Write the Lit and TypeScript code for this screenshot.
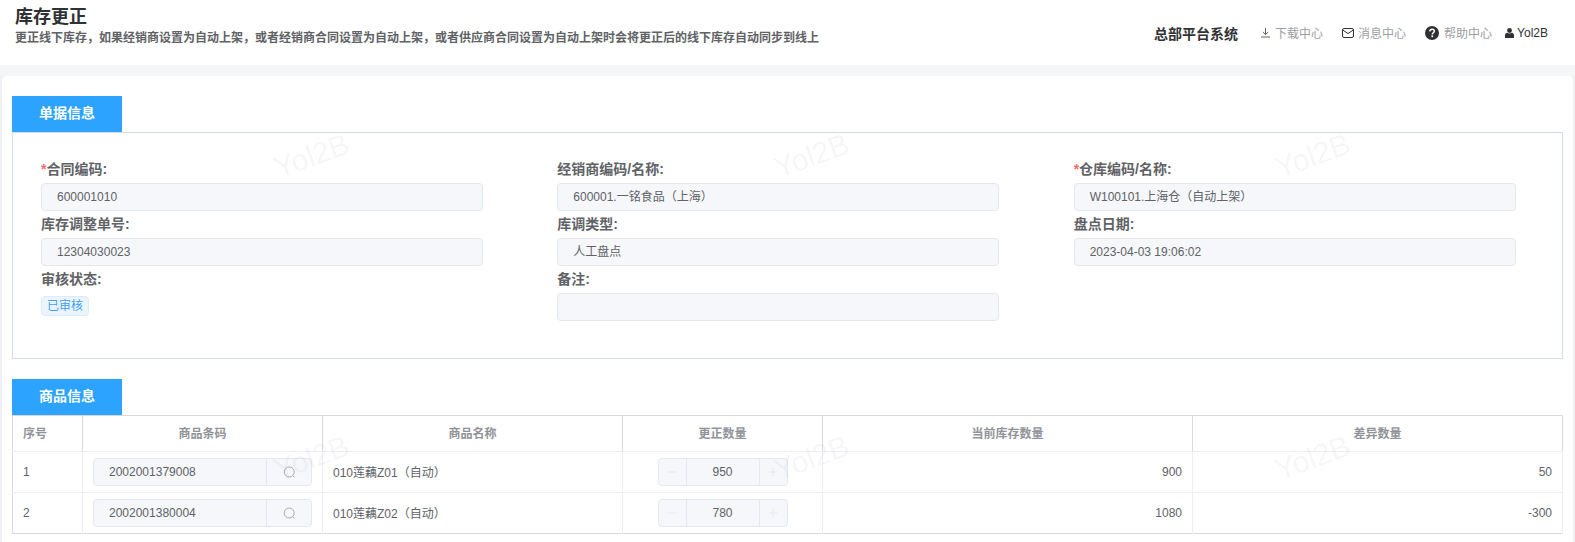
import { LitElement, html, css, svg } from "lit";
import { customElement } from "lit/decorators.js";

const F = [
  ["*", "合同编码:", "600001010"],
  ["", "经销商编码/名称:", "600001.一铭食品（上海）"],
  ["*", "仓库编码/名称:", "W100101.上海仓（自动上架）"],
  ["", "库存调整单号:", "12304030023"],
  ["", "库调类型:", "人工盘点"],
  ["", "盘点日期:", "2023-04-03 19:06:02"],
];
const R = [
  ["1", "2002001379008", "010莲藕Z01（自动）", "950", "900", "50"],
  ["2", "2002001380004", "010莲藕Z02（自动）", "780", "1080", "-300"],
];
const MARKS = [
  [273, 139], [773, 139], [1274, 139],
  [273, 441], [773, 441], [1274, 441],
];

@customElement("app-root")
export class AppRoot extends LitElement {
  static styles = css`
    :host {
      display: block;
      width: 1575px;
      height: 542px;
      overflow: hidden;
      position: relative;
      background: #f0f1f6;
      color: #606266;
      font-family: "Liberation Sans", "Noto Sans CJK SC", sans-serif;
      font-size: 12px;
    }
    .hdr {
      height: 65px;
      background: #fff;
      display: flex;
      justify-content: space-between;
      box-sizing: border-box;
      padding: 6px 27px 0 15px;
    }
    h1 {
      margin: 0;
      font-size: 18px;
      line-height: 22px;
      font-weight: 700;
      color: #303133;
    }
    .sub {
      font-size: 12px;
      line-height: 16px;
      margin-top: 2px;
      font-weight: 700;
      color: #606266;
    }
    .nav {
      display: flex;
      align-items: center;
      height: 53px;
      color: #9c9ea3;
    }
    .sys { font-size: 14px; font-weight: 700; color: #303133; margin-right: 22px; }
    .nav svg { flex: none; display: block; }
    .it { display: flex; align-items: center; gap: 4px; margin-right: 19px; }
    .it.help { gap: 5px; margin-right: 13px; }
    .it.user { gap: 3px; margin-right: 0; color: #303133; }
    .band { height: 11px; background: #f5f6f8; }
    .card {
      margin: 0 2px;
      height: 480px;
      background: #fff;
      border-radius: 4px 4px 0 0;
      box-sizing: border-box;
      padding: 20px 10px 0;
    }
    .tab {
      width: 110px;
      height: 36px;
      box-sizing: border-box;
      padding-bottom: 4px;
      background: #2ba3ff;
      color: #fff;
      font-size: 14px;
      font-weight: 700;
      display: flex;
      align-items: center;
      justify-content: center;
    }
    .box {
      border: 1px solid #d3dde8;
      height: 227px;
      box-sizing: border-box;
      margin-bottom: 20px;
      padding: 27px 0 0;
      display: grid;
      grid-template-columns: repeat(3, 1fr);
      grid-auto-rows: 55px;
      align-content: start;
    }
    .f { padding-left: 28px; }
    .lab {
      font-size: 14px;
      font-weight: 700;
      line-height: 19px;
      height: 23px;
      white-space: nowrap;
    }
    .star { color: #f56c6c; }
    .inp {
      width: 442px;
      height: 28px;
      box-sizing: border-box;
      background: #f5f7fa;
      border: 1px solid #e4e7ed;
      border-radius: 4px;
      padding: 0 15px;
      line-height: 26px;
      font-size: 12px;
      color: #606266;
      white-space: nowrap;
    }
    .tag {
      display: inline-block;
      margin-top: 3px;
      height: 20px;
      line-height: 18px;
      box-sizing: border-box;
      padding: 0 5px;
      background: #ecf5ff;
      border: 1px solid #d9ecff;
      border-radius: 4px;
      color: #409eff;
      font-size: 12px;
    }
    table {
      border-collapse: collapse;
      table-layout: fixed;
      width: 1551px;
      font-size: 12px;
      border: 1px solid #d8d9dd;
    }
    th {
      height: 36px;
      padding: 0 0 3px;
      box-sizing: border-box;
      font-size: 12px;
      font-weight: 700;
      color: #909399;
      border-right: 1px solid #d8d9dd;
      border-bottom: 1px solid #ebeef5;
      text-align: center;
    }
    th.l { text-align: left; padding-left: 10px; }
    td {
      height: 41px;
      padding: 0 10px;
      border-right: 1px solid #ebeef5;
      border-bottom: 1px solid #ebeef5;
      box-sizing: border-box;
      white-space: nowrap;
    }
    tr:last-child td { border-bottom: 0; }
    td.r { text-align: right; }
    td.c { text-align: center; }
    td.nm { padding-bottom: 2px; }
    .code {
      display: flex;
      height: 28px;
      box-sizing: border-box;
      background: #f5f7fa;
      border: 1px solid #e4e7ed;
      border-radius: 4px;
      line-height: 27px;
    }
    .code span { flex: 1; padding-left: 15px; }
    .code i {
      width: 44px;
      border-left: 1px solid #e4e7ed;
      display: flex;
      align-items: center;
      justify-content: center;
    }
    .num {
      display: inline-flex;
      width: 130px;
      height: 28px;
      box-sizing: border-box;
      background: #f5f7fa;
      border: 1px solid #e4e7ed;
      border-radius: 4px;
      line-height: 27px;
      vertical-align: middle;
    }
    .num span { flex: 1; text-align: center; }
    .num i {
      width: 28px;
      box-sizing: border-box;
      display: flex;
      align-items: center;
      justify-content: center;
      font-style: normal;
    }
    .num i:first-child { border-right: 1px solid #e4e7ed; }
    .num i:last-child { border-left: 1px solid #e4e7ed; }
    .wm {
      position: absolute;
      font-size: 30px;
      font-weight: 400;
      line-height: 34px;
      color: rgba(120, 125, 140, 0.07);
      transform: rotate(-20deg);
      pointer-events: none;
      font-family: "Liberation Sans", sans-serif;
    }
  `;

  private search() {
    return html`<svg width="13" height="13" viewBox="0 0 13 13" fill="none" stroke="#a8abb2" stroke-width="1">
      <circle cx="6.2" cy="6" r="5"></circle><path d="M9.8 9.6l1.8 1.8"></path>
    </svg>`;
  }

  private sign(d: string) {
    return html`<svg width="10" height="10" viewBox="0 0 10 10" fill="none" stroke="#e4e7ed" stroke-width="1">
      ${svg`<path d=${d}></path>`}
    </svg>`;
  }

  render() {
    return html`
      <div class="hdr">
        <div>
          <h1>库存更正</h1>
          <div class="sub">更正线下库存，如果经销商设置为自动上架，或者经销商合同设置为自动上架，或者供应商合同设置为自动上架时会将更正后的线下库存自动同步到线上</div>
        </div>
        <div class="nav">
          <span class="sys">总部平台系统</span>
          <span class="it">
            <svg width="11" height="11" viewBox="0 0 11 11" fill="none" stroke="#606266" stroke-width="1">
              <path d="M5.5 1v6.500M2.800 5l2.700 2.600L8.200 5M1 10h9"></path>
            </svg>下载中心</span>
          <span class="it">
            <svg width="12" height="10" viewBox="0 0 12 10" fill="none" stroke="#303133" stroke-width="1">
              <rect x=".5" y=".5" width="11" height="9" rx="1.500"></rect><path d="M1 2.200l5 3.400 5-3.400"></path>
            </svg>消息中心</span>
          <span class="it help">
            <svg width="14" height="14" viewBox="0 0 14 14">
              <circle cx="7" cy="7" r="7" fill="#303133"></circle>
              <path d="M4.800 5.400C4.900 4 5.800 3.200 7.100 3.200c1.300 0 2.200.8 2.200 1.900 0 1.700-2 1.600-2 3.300" fill="none" stroke="#fff" stroke-width="1.500"></path>
              <rect x="6.400" y="9.400" width="1.700" height="1.700" fill="#fff"></rect>
            </svg>帮助中心</span>
          <span class="it user">
            <svg width="9" height="10" viewBox="0 0 9 10" fill="#303133">
              <circle cx="4.500" cy="2.500" r="2.400"></circle>
              <path d="M0 10V7.600C0 5.800 1.200 4.800 2.300 4.800 3 5.300 3.700 5.600 4.500 5.600s1.500-.3 2.200-.8C7.800 4.800 9 5.800 9 7.600V10z"></path>
            </svg>Yol2B</span>
        </div>
      </div>
      <div class="band"></div>
      <div class="card">
        <div class="tab">单据信息</div>
        <div class="box">
          ${F.map(
            ([s, l, v]) => html`<div class="f">
              <div class="lab"><span class="star">${s}</span>${l}</div>
              <div class="inp">${v}</div>
            </div>`
          )}
          <div class="f"><div class="lab">审核状态:</div><span class="tag">已审核</span></div>
          <div class="f"><div class="lab">备注:</div><div class="inp"></div></div>
        </div>
        <div class="tab">商品信息</div>
        <table>
          <colgroup>
            <col style="width:70px" /><col style="width:240px" /><col style="width:300px" />
            <col style="width:200px" /><col style="width:370px" /><col />
          </colgroup>
          <tr>
            <th class="l">序号</th><th>商品条码</th><th>商品名称</th><th>更正数量</th><th>当前库存数量</th><th>差异数量</th>
          </tr>
          ${R.map(
            (r) => html`<tr>
              <td>${r[0]}</td>
              <td><div class="code"><span>${r[1]}</span><i>${this.search()}</i></div></td>
              <td class="nm">${r[2]}</td>
              <td class="c"><div class="num"><i>${this.sign("M1 5h8")}</i><span>${r[3]}</span><i>${this.sign("M1 5h8M5 1v8")}</i></div></td>
              <td class="r">${r[4]}</td>
              <td class="r">${r[5]}</td>
            </tr>`
          )}
        </table>
      </div>
      ${MARKS.map(
        ([x, y]) => html`<div class="wm" style="left:${x}px;top:${y}px">Yol2B</div>`
      )}
    `;
  }
}
